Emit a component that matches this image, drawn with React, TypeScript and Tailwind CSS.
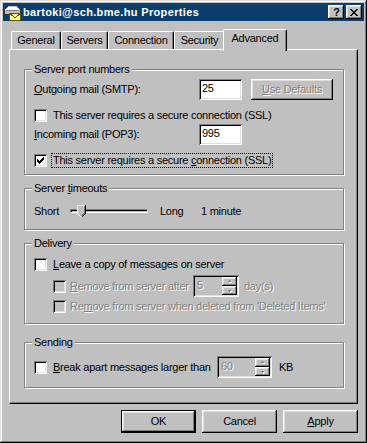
import React from 'react';

const raised =
  'shadow-[inset_-1px_-1px_0_#000,inset_1px_1px_0_#fff,inset_-2px_-2px_0_#808080,inset_2px_2px_0_#dfdfdf]';
const sunken =
  'shadow-[inset_1px_1px_0_#808080,inset_-1px_-1px_0_#fff,inset_2px_2px_0_#000,inset_-2px_-2px_0_#dfdfdf]';
const disabledText = 'text-[#808080] [text-shadow:1px_1px_0_#fff]';

const checkRows = ['......#', '.....##', '#...###', '##.###.', '#####..', '.###...', '..#....'];

function Key({ children }: { children: React.ReactNode }) {
  return <span className="underline underline-offset-[1px]">{children}</span>;
}

function CheckBox({ checked = false, disabled = false }: { checked?: boolean; disabled?: boolean }) {
  return (
    <span
      className={`w-[13px] h-[13px] shrink-0 flex items-center justify-center ${disabled ? 'bg-[#c0c0c0]' : 'bg-white'} ${sunken}`}
    >
      {checked && (
        <svg width="7" height="7" viewBox="0 0 7 7" shapeRendering="crispEdges">
          {checkRows.map((row, y) =>
            row.split('').map((c, x) => (c === '#' ? <rect key={`${x}-${y}`} x={x} y={y} width="1" height="1" fill="#000" /> : null))
          )}
        </svg>
      )}
    </span>
  );
}

function Arrow({ up }: { up?: boolean }) {
  return (
    <svg width="6" height="4" viewBox="0 0 6 4" shapeRendering="crispEdges">
      {up ? (
        <>
          <rect x="3" y="1" width="1" height="1" fill="#fff" />
          <rect x="2" y="2" width="3" height="1" fill="#fff" />
          <rect x="2" y="0" width="1" height="1" fill="#808080" />
          <rect x="1" y="1" width="3" height="1" fill="#808080" />
        </>
      ) : (
        <>
          <rect x="2" y="2" width="3" height="1" fill="#fff" />
          <rect x="3" y="3" width="1" height="1" fill="#fff" />
          <rect x="1" y="1" width="3" height="1" fill="#808080" />
          <rect x="2" y="2" width="1" height="1" fill="#808080" />
        </>
      )}
    </svg>
  );
}

function Spin({ value, className }: { value: string; className: string }) {
  return (
    <div className={`${className} h-[22px] shrink-0 flex p-[2px] bg-[#c0c0c0] ${sunken}`}>
      <span className={`flex-1 pl-[2px] pt-[2px] ${disabledText}`}>{value}</span>
      <div className="w-[15px] flex flex-col">
        <div className={`flex-1 flex items-center justify-center ${raised}`}>
          <Arrow up />
        </div>
        <div className={`flex-1 flex items-center justify-center ${raised}`}>
          <Arrow />
        </div>
      </div>
    </div>
  );
}

function Group({ title, className, children }: { title: React.ReactNode; className: string; children: React.ReactNode }) {
  return (
    <div className={`relative w-[320px] border border-[#808080] shadow-[inset_1px_1px_0_#fff,1px_1px_0_#fff] pl-[9px] ${className}`}>
      <span className="absolute -top-[7px] left-[7px] bg-[#c0c0c0] px-[2px]">{title}</span>
      {children}
    </div>
  );
}

// mail server with an envelope in front of it
function TitleIcon() {
  return (
    <svg width="18" height="17" viewBox="0 0 18 17" shapeRendering="crispEdges">
      <path d="M0.5 10.5 V5.5 L4.5 1.5 H12.5 L16.5 5.5 V10.5 Z" fill="#c0c0c0" stroke="#303030" />
      <path d="M1.5 5.5 L4.8 2.5 H12.2 L15.5 5.5 Z" fill="#fff" />
      <rect x="2" y="6" width="13" height="1" fill="#808080" />
      <rect x="5.5" y="9.5" width="11" height="7" fill="#ffff9a" stroke="#5a5a00" />
      <path d="M5.5 9.5 L11 13.5 L16.5 9.5" fill="none" stroke="#5a5a00" />
    </svg>
  );
}

function TitleBar() {
  return (
    <div className="h-[18px] bg-[#0b3d6d] flex items-center pl-[1px] pr-[2px]">
      <TitleIcon />
      <span className="ml-[1px] text-white font-bold tracking-[0.35px]">bartoki@sch.bme.hu Properties</span>
      <div className="ml-auto flex gap-[2px]">
        <div className={`w-[16px] h-[14px] bg-[#c0c0c0] flex items-center justify-center font-bold text-[11px] leading-none pl-[1px] ${raised}`}>?</div>
        <div className={`w-[16px] h-[14px] bg-[#c0c0c0] flex items-center justify-center ${raised}`}>
          <svg width="8" height="7" viewBox="0 0 8 7" shapeRendering="crispEdges">
            {[0, 1, 2, 3, 4, 5, 6].map((i) => (
              <React.Fragment key={i}>
                <rect x={i} y={i} width="2" height="1" fill="#000" />
                <rect x={6 - i} y={i} width="2" height="1" fill="#000" />
              </React.Fragment>
            ))}
          </svg>
        </div>
      </div>
    </div>
  );
}

const tabs = [
  { label: 'General', w: 'w-[50px]' },
  { label: 'Servers', w: 'w-[47px]' },
  { label: 'Connection', w: 'w-[66px]' },
  { label: 'Security', w: 'w-[51px]' },
];

function Tabs() {
  return (
    <div className="flex items-end h-[28px] pl-[2px]">
      {tabs.map((t) => (
        <div
          key={t.label}
          className={`${t.w} h-[18px] flex items-center justify-center border-t border-l border-white border-r border-r-black rounded-t-[2px] shadow-[inset_-1px_0_0_#808080]`}
        >
          {t.label}
        </div>
      ))}
      <div className="relative z-10 w-[64px] h-[22px] -mb-[2px] -ml-[2px] flex justify-center pt-[2px] bg-[#c0c0c0] border-t border-l border-white border-r border-r-black rounded-t-[2px] shadow-[inset_-1px_0_0_#808080]">
        Advanced
      </div>
    </div>
  );
}

function Button({ children, def = false }: { children: React.ReactNode; def?: boolean }) {
  return (
    <div
      className={`w-[75px] h-[23px] flex items-center justify-center bg-[#c0c0c0] ${
        def
          ? 'shadow-[inset_0_0_0_1px_#000,inset_-2px_-2px_0_#000,inset_2px_2px_0_#fff,inset_-3px_-3px_0_#808080,inset_3px_3px_0_#dfdfdf]'
          : raised
      }`}
    >
      {children}
    </div>
  );
}

export default function App() {
  return (
    <div className="w-[367px] h-[443px] bg-[#c0c0c0] p-[3px] shadow-[inset_-1px_-1px_0_#000,inset_1px_1px_0_#dfdfdf,inset_-2px_-2px_0_#808080,inset_2px_2px_0_#fff] font-['Liberation_Sans',Arial,sans-serif] text-[11px] leading-[13px] text-black tracking-[-0.25px] select-none">
      <TitleBar />
      <div className="px-[6px]">
        <Tabs />
        <div className="h-[355px] border-t border-l border-white border-r border-b border-r-black border-b-black shadow-[inset_-1px_-1px_0_#808080] pt-[19px] pl-[14px]">
          <Group title="Server port numbers" className="h-[106px] pt-[9px]">
            <div className="flex items-center h-[21px]">
              <span className="w-[165px]">
                <Key>O</Key>utgoing mail (SMTP):
              </span>
              <div className={`w-[43px] h-[21px] bg-white pl-[3px] pt-[3px] ${sunken}`}>25</div>
              <div className={`ml-[9px] w-[82px] h-[21px] flex items-center justify-center ${disabledText} ${raised}`}>
                <span>
                  <Key>U</Key>se Defaults
                </span>
              </div>
            </div>
            <div className="flex items-center gap-[6px] mt-[9px] h-[13px]">
              <CheckBox />
              <span>This server requires a secure connection (SSL)</span>
            </div>
            <div className="flex items-center h-[21px] mt-[2px]">
              <span className="w-[165px]">
                <Key>I</Key>ncoming mail (POP3):
              </span>
              <div className={`w-[43px] h-[21px] bg-white pl-[3px] pt-[3px] ${sunken}`}>995</div>
            </div>
            <div className="flex items-center h-[16px] mt-[7px]">
              <CheckBox checked />
              <span className="ml-[4px] border border-dotted border-black px-[1px] leading-[13px]">
                This server requires a secure <Key>c</Key>onnection (SSL)
              </span>
            </div>
          </Group>

          <Group
            title={
              <>
                Server <Key>t</Key>imeouts
              </>
            }
            className="h-[42px] mt-[13px] pt-[13px]"
          >
            <div className="flex items-center h-[19px]">
              <span className="w-[36px]">Short</span>
              <div className="relative w-[78px] h-[19px]">
                <div className="absolute left-0 right-0 top-[7px] h-[4px] border-t border-l border-t-[#808080] border-l-[#808080] border-b border-r border-b-white border-r-white shadow-[inset_1px_1px_0_#000]" />
                <svg className="absolute left-[7px] top-[3px]" width="9" height="13" viewBox="0 0 9 13" shapeRendering="crispEdges">
                  <path d="M0 0 H8 V8 L4 12 L0 8 Z" fill="#c0c0c0" />
                  <path d="M0.5 8.5 V0.5 H7.5" fill="none" stroke="#fff" />
                  <path d="M0.5 8.5 L4 12" fill="none" stroke="#fff" />
                  <path d="M8.5 0 V8.5 L4.5 12.5" fill="none" stroke="#000" />
                  <path d="M7.5 1 V8.2 L4.5 11.2" fill="none" stroke="#808080" />
                </svg>
              </div>
              <span className="ml-[12px] w-[41px]">Long</span>
              <span>1 minute</span>
            </div>
          </Group>

          <Group title="Delivery" className="h-[81px] mt-[13px] pt-[14px]">
            <div className="flex items-center gap-[6px] h-[13px]">
              <CheckBox />
              <span>
                <Key>L</Key>eave a copy of messages on server
              </span>
            </div>
            <div className="flex items-center h-[22px] mt-[4px] pl-[19px]">
              <CheckBox disabled />
              <span className={`ml-[4px] w-[123px] ${disabledText}`}>
                <Key>R</Key>emove from server after
              </span>
              <Spin value="5" className="w-[46px]" />
              <span className={`ml-[5px] ${disabledText}`}>day(s)</span>
            </div>
            <div className="flex items-center h-[13px] mt-[3px] pl-[19px]">
              <CheckBox disabled />
              <span className={`ml-[4px] ${disabledText}`}>
                Re<Key>m</Key>ove from server when deleted from 'Deleted Items'
              </span>
            </div>
          </Group>

          <Group title="Sending" className="h-[46px] mt-[18px] pt-[13px]">
            <div className="flex items-center h-[22px]">
              <CheckBox />
              <span className="ml-[6px] w-[164px]">
                <Key>B</Key>reak apart messages larger than
              </span>
              <Spin value="60" className="w-[55px]" />
              <span className="ml-[7px]">KB</span>
            </div>
          </Group>
        </div>
      </div>
      <div className="flex justify-end gap-[6px] pr-[6px] mt-[6px]">
        <Button def>OK</Button>
        <Button>Cancel</Button>
        <Button>
          <span>
            <Key>A</Key>pply
          </span>
        </Button>
      </div>
    </div>
  );
}
